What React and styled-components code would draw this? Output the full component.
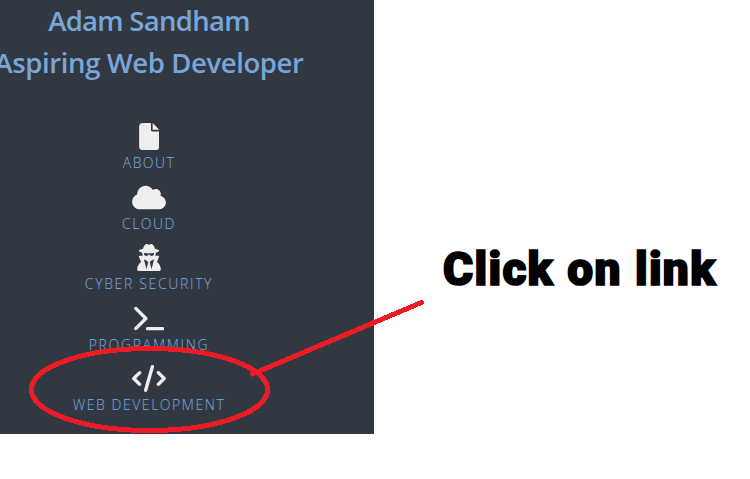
import React from "react";
import styled, { createGlobalStyle } from "styled-components";
import { FaFile, FaCloud, FaUserSecret, FaTerminal, FaCode } from "react-icons/fa6";

const GlobalStyle = createGlobalStyle`
  body { margin: 0; background: #fff; overflow: hidden; }
`;

const Page = styled.div`
  position: relative;
  display: flex;
  width: 750px;
  height: 479px;
  overflow: hidden;
`;

const Sidebar = styled.aside`
  box-sizing: border-box;
  width: 374px;
  height: 434px;
  background: #323841;
  overflow: hidden;
`;

const Column = styled.div`
  display: flex;
  flex-direction: column;
  align-items: center;
  width: 320px;
  margin-left: -11px;
`;

const Title = styled.h1`
  margin: 0;
  font: 600 27.5px/42px "Open Sans", "Noto Sans", sans-serif;
  letter-spacing: ${(p) => p.$spacing};
  white-space: nowrap;
  color: #79a6d8;
`;

const Nav = styled.nav`
  display: flex;
  flex-direction: column;
  align-items: center;
  margin-top: 39px;
`;

const NavLink = styled.a`
  display: flex;
  flex-direction: column;
  align-items: center;
  height: 60.5px;
  color: #78ade6;
  svg {
    display: block;
    height: 27px;
    width: ${(p) => p.$iconWidth}px;
    color: #eee;
  }
`;

const NavLabel = styled.span`
  margin-top: 3px;
  font: 300 14px/20px "Open Sans", "Noto Sans", sans-serif;
  letter-spacing: ${(p) => p.$spacing};
  white-space: nowrap;
`;

const Main = styled.main`
  padding: 241px 0 0 69px;
`;

const Callout = styled.p`
  margin: 0;
  font: 900 46px/56px Roboto, sans-serif;
  letter-spacing: 1.3px;
  word-spacing: 0.5px;
  -webkit-text-stroke: 1.7px #000;
  white-space: nowrap;
  color: #000;
`;

const Marker = styled.svg`
  position: absolute;
  inset: 0;
  fill: none;
  stroke: #ed1c24;
  stroke-width: 5;
  stroke-linecap: round;
  pointer-events: none;
`;

const links = [
  { label: "ABOUT", Icon: FaFile, iconWidth: 20.5, spacing: "1.4px" },
  { label: "CLOUD", Icon: FaCloud, iconWidth: 34, spacing: "1.5px" },
  { label: "CYBER SECURITY", Icon: FaUserSecret, iconWidth: 24, spacing: "1.65px" },
  { label: "PROGRAMMING", Icon: FaTerminal, iconWidth: 30.5, spacing: "1.7px" },
  { label: "WEB DEVELOPMENT", Icon: FaCode, iconWidth: 34, spacing: "1.55px" },
];

export default function App() {
  return (
    <>
      <GlobalStyle />
      <Page>
        <Sidebar>
          <Column>
            <Title $spacing="-0.7px">Adam Sandham</Title>
            <Title $spacing="-0.4px">Aspiring Web Developer</Title>
            <Nav>
              {links.map(({ label, Icon, iconWidth, spacing }) => (
                <NavLink key={label} $iconWidth={iconWidth}>
                  <Icon />
                  <NavLabel $spacing={spacing}>{label}</NavLabel>
                </NavLink>
              ))}
            </Nav>
          </Column>
        </Sidebar>
        <Main>
          <Callout>Click on link</Callout>
        </Main>
        <Marker width="750" height="479" viewBox="0 0 750 479" shapeRendering="crispEdges">
          <ellipse cx="149.5" cy="389.5" rx="118" ry="41" />
          <path d="M252.5 374 L421.5 302.500" />
        </Marker>
      </Page>
    </>
  );
}
